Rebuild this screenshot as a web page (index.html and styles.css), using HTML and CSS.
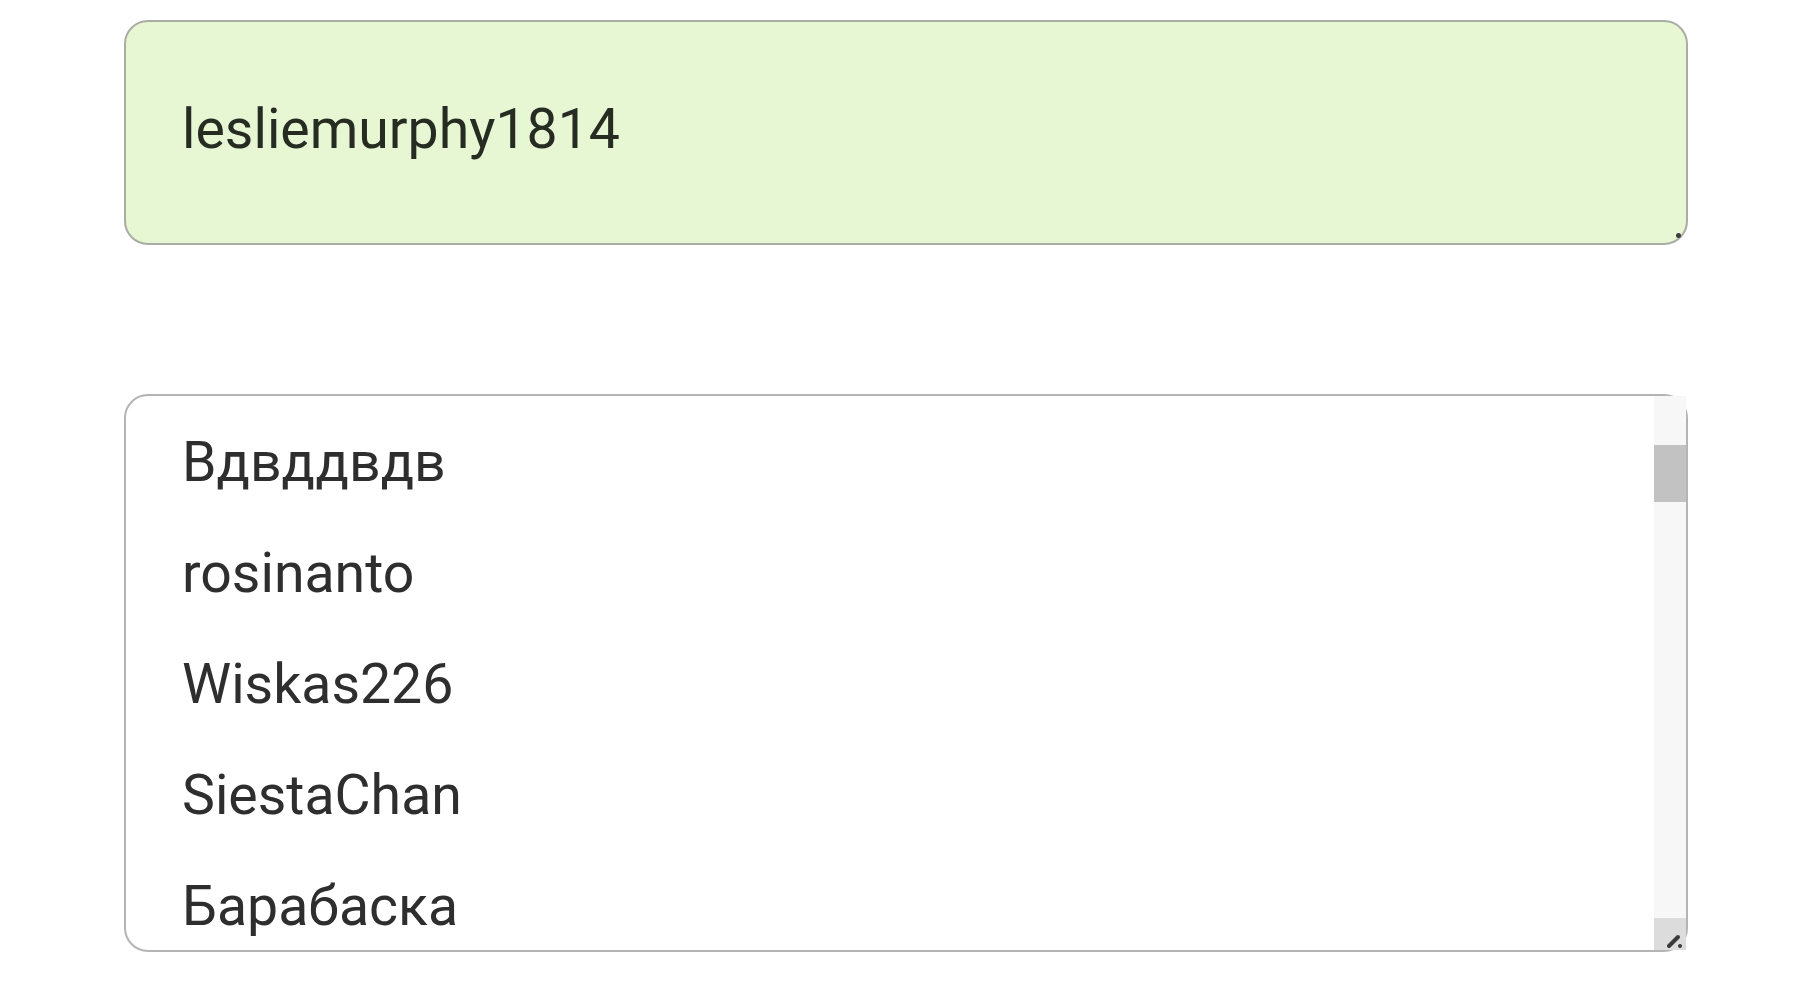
FILE: index.html
```html
<!DOCTYPE html>
<html lang="ru">
<head>
<meta charset="utf-8">
<title>Users</title>
<link rel="stylesheet" href="styles.css">
</head>
<body>
<main class="page">
  <div class="field">
    <span class="field-value">lesliemurphy1814</span>
    <span class="field-grip"></span>
  </div>
  <div class="listbox">
    <ul class="list">
      <li>Вдвддвдв</li>
      <li>rosinanto</li>
      <li>Wiskas226</li>
      <li>SiestaChan</li>
      <li>Барабаска</li>
    </ul>
    <div class="scrollbar">
      <div class="track">
        <div class="thumb"></div>
      </div>
      <div class="corner">
        <svg width="32" height="32" viewBox="0 0 32 32">
          <path d="M15 28 L24 19" stroke="#3a3a3a" stroke-width="4" stroke-linecap="round"/>
          <circle cx="26" cy="28" r="2" fill="#3a3a3a"/>
        </svg>
      </div>
    </div>
  </div>
</main>
</body>
</html>
```

FILE: styles.css
```css
html, body {
  margin: 0;
  padding: 0;
  background: #ffffff;
}

.page {
  display: flex;
  flex-direction: column;
  gap: 149px;
  padding: 20px 124px 0;
  font-family: Roboto, "Noto Sans", "Liberation Sans", sans-serif;
}

.field {
  position: relative;
  box-sizing: border-box;
  height: 225px;
  display: flex;
  align-items: center;
  padding: 0 56px 6px;
  background: #e7f6d3;
  border: 2px solid #a9ada5;
  border-radius: 24px;
}

.field-value {
  font-size: 55.4px;
  color: #262c22;
}

.field-grip {
  position: absolute;
  right: 5px;
  bottom: 5px;
  width: 5px;
  height: 5px;
  border-radius: 50%;
  background: #3c3c3c;
}

.listbox {
  box-sizing: border-box;
  height: 558px;
  display: grid;
  grid-template-columns: 1fr 32px;
  background: #ffffff;
  border: 2px solid #b4b4b4;
  border-radius: 24px;
}

.list {
  margin: 0;
  padding: 11px 0 0 56px;
  list-style: none;
  overflow: hidden;
  font-size: 55.4px;
  line-height: 111px;
  color: #2e2e2e;
}

.list li {
  white-space: nowrap;
}

.scrollbar {
  display: flex;
  flex-direction: column;
  background: #f7f7f7;
}

.track {
  flex: 1;
  padding-top: 49px;
}

.thumb {
  height: 57px;
  background: #c2c2c2;
}

.corner {
  height: 32px;
  background: #dcdcdc;
}

.corner svg {
  display: block;
}
```
